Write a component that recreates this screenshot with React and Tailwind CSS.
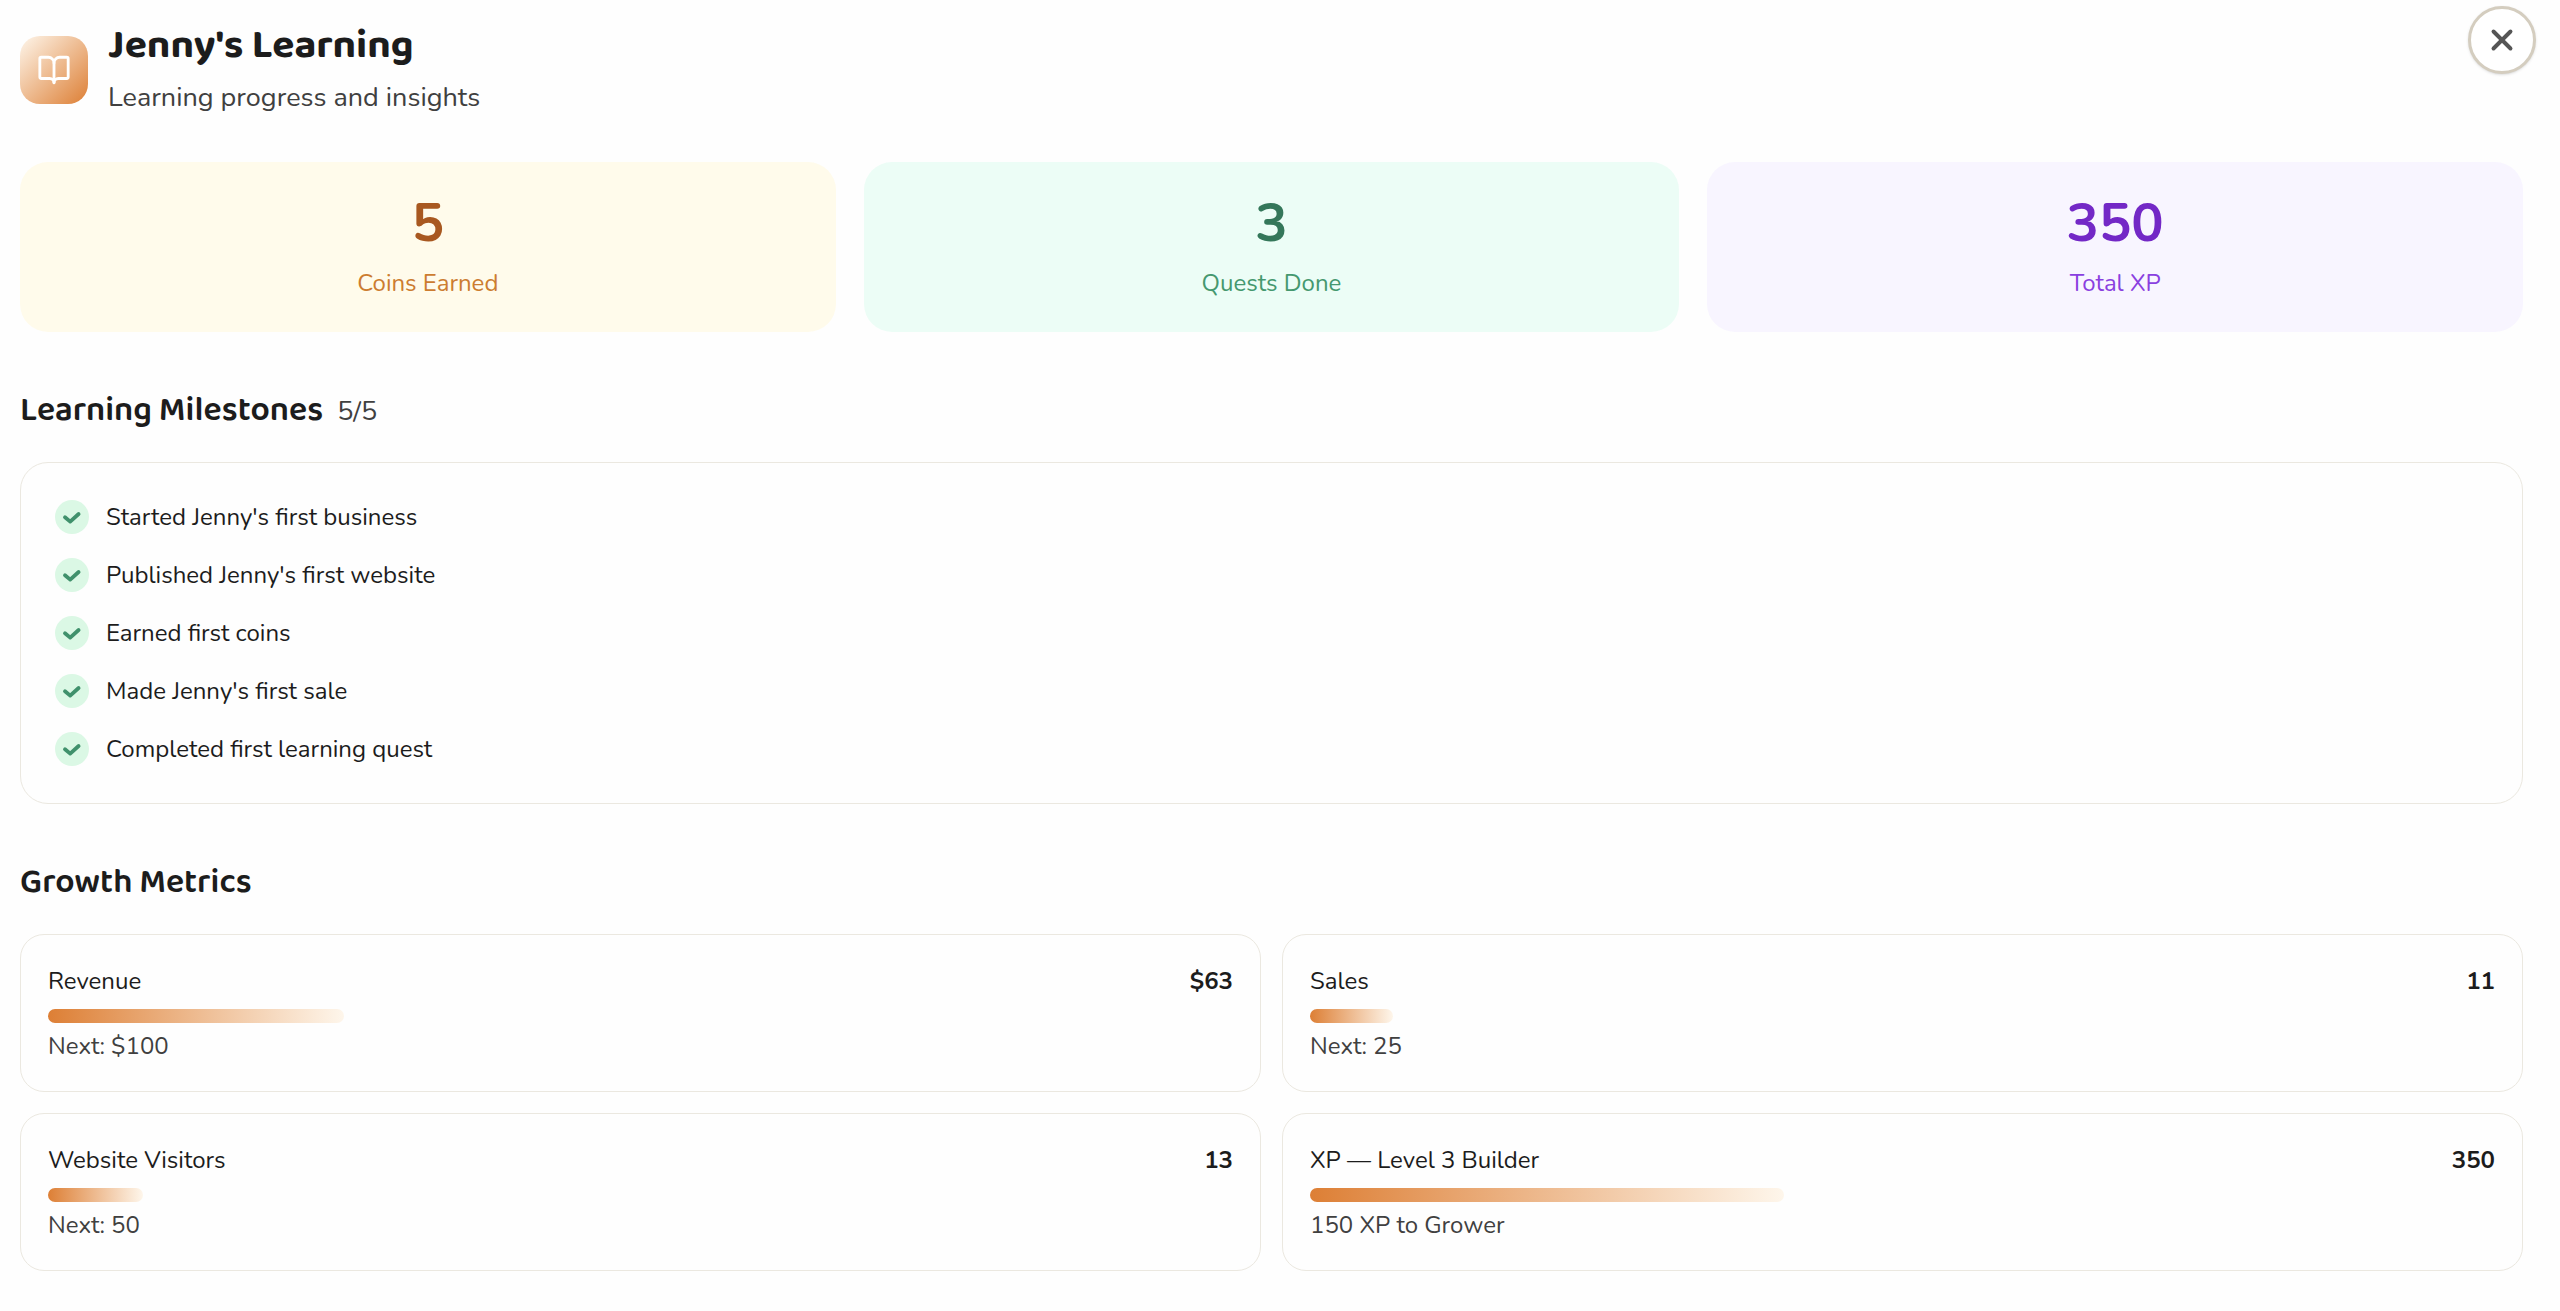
import { BookOpen, X } from "lucide-react";

const stats = [
  {
    value: "5",
    label: "Coins Earned",
    card: "bg-[#fffbeb]",
    valueColor: "text-[#a85820]",
    labelColor: "text-[#cc7c30]",
  },
  {
    value: "3",
    label: "Quests Done",
    card: "bg-[#ecfdf6]",
    valueColor: "text-[#34775a]",
    labelColor: "text-[#45986f]",
  },
  {
    value: "350",
    label: "Total XP",
    card: "bg-[#f8f5ff]",
    valueColor: "text-[#7328c6]",
    labelColor: "text-[#8a3fe0]",
  },
];

const milestones = [
  "Started Jenny's first business",
  "Published Jenny's first website",
  "Earned first coins",
  "Made Jenny's first sale",
  "Completed first learning quest",
];

const metrics = [
  { name: "Revenue", value: "$63", progress: 25, next: "Next: $100" },
  { name: "Sales", value: "11", progress: 7, next: "Next: 25" },
  { name: "Website Visitors", value: "13", progress: 8, next: "Next: 50" },
  { name: "XP — Level 3 Builder", value: "350", progress: 40, next: "150 XP to Grower" },
];

const CheckBadge = () => (
  <svg viewBox="0 0 34 34" className="size-[34px] shrink-0" fill="none" aria-hidden="true">
    <circle cx="17" cy="17" r="17" fill="#dbf8e5" />
    <path
      d="M10 17.2l5.2 4.4 8.4-7.6"
      stroke="#40916c"
      strokeWidth="3.8"
      strokeLinecap="round"
      strokeLinejoin="round"
    />
  </svg>
);

const StatCard = ({ stat }) => (
  <div className={`flex flex-col items-center rounded-[28px] pt-[25px] pb-[29px] ${stat.card}`}>
    <span className={`text-[54px] leading-[72px] font-bold ${stat.valueColor}`}>{stat.value}</span>
    <span className={`mt-1 text-[24px] leading-[40px] ${stat.labelColor}`}>{stat.label}</span>
  </div>
);

const MetricCard = ({ metric }) => (
  <div className="rounded-[24px] border border-[#ebe8e0] px-[27px] pt-[26px] pb-[25px]">
    <div className="flex items-center justify-between text-[24px] leading-[40px]">
      <span>{metric.name}</span>
      <span className="font-bold">{metric.value}</span>
    </div>
    {/* Progress bar */}
    <div className="mt-2 h-[14px]">
      <div
        className="h-full rounded-full bg-linear-to-r/srgb from-[#dd7f35] to-[#fef6eb]"
        style={{ width: `${metric.progress}%` }}
      />
    </div>
    <p className="mt-[3px] text-[24px] leading-[40px] text-[#404040]">{metric.next}</p>
  </div>
);

const App = () => {
  return (
    <div className="relative min-h-screen bg-[#fefefe] pr-[37px] pb-10 pl-5 font-['Nunito','Lato',sans-serif] text-[#1c1c1c]">
      {/* Close Button */}
      <button
        type="button"
        aria-label="Close"
        className="absolute top-[6px] right-6 flex size-[68px] items-center justify-center rounded-full border-[3px] border-[#d4cdbf] bg-white text-[#555555] shadow-sm"
      >
        <X className="size-[34px]" strokeWidth={2.75} />
      </button>

      {/* Header */}
      <header className="flex items-center gap-5 pt-[18px]">
        <div className="flex size-[68px] items-center justify-center rounded-[20px] bg-linear-to-br/srgb from-[#fef6eb] to-[#dd7f35] text-white">
          <BookOpen className="size-[34px]" strokeWidth={2} />
        </div>
        <div>
          <h1 className="font-['Baloo_2','Lato',sans-serif] text-[41px] leading-[56px] font-bold">
            Jenny's Learning
          </h1>
          <p className="text-[27px] leading-[48px] text-[#404040]">Learning progress and insights</p>
        </div>
      </header>

      {/* Stats */}
      <section className="mt-10 grid grid-cols-3 gap-7">
        {stats.map((stat) => (
          <StatCard key={stat.label} stat={stat} />
        ))}
      </section>

      {/* Milestones */}
      <section className="mt-[55px]">
        <div className="flex h-12 items-baseline gap-[14px] leading-[48px]">
          <h2 className="font-['Baloo_2','Lato',sans-serif] text-[34px] font-semibold">Learning Milestones</h2>
          <span className="text-[27px] text-[#404040]">5/5</span>
        </div>
        <ul className="mt-[27px] space-y-[18px] rounded-[28px] border border-[#ebe8e0] p-[34px]">
          {milestones.map((milestone) => (
            <li key={milestone} className="flex items-center gap-[17px] text-[24px] leading-[40px]">
              <CheckBadge />
              {milestone}
            </li>
          ))}
        </ul>
      </section>

      {/* Growth Metrics */}
      <section className="mt-[55px]">
        <h2 className="font-['Baloo_2','Lato',sans-serif] text-[34px] leading-[48px] font-semibold">Growth Metrics</h2>
        <div className="mt-[27px] grid grid-cols-2 gap-[21px]">
          {metrics.map((metric) => (
            <MetricCard key={metric.name} metric={metric} />
          ))}
        </div>
      </section>
    </div>
  );
};

export default App;
